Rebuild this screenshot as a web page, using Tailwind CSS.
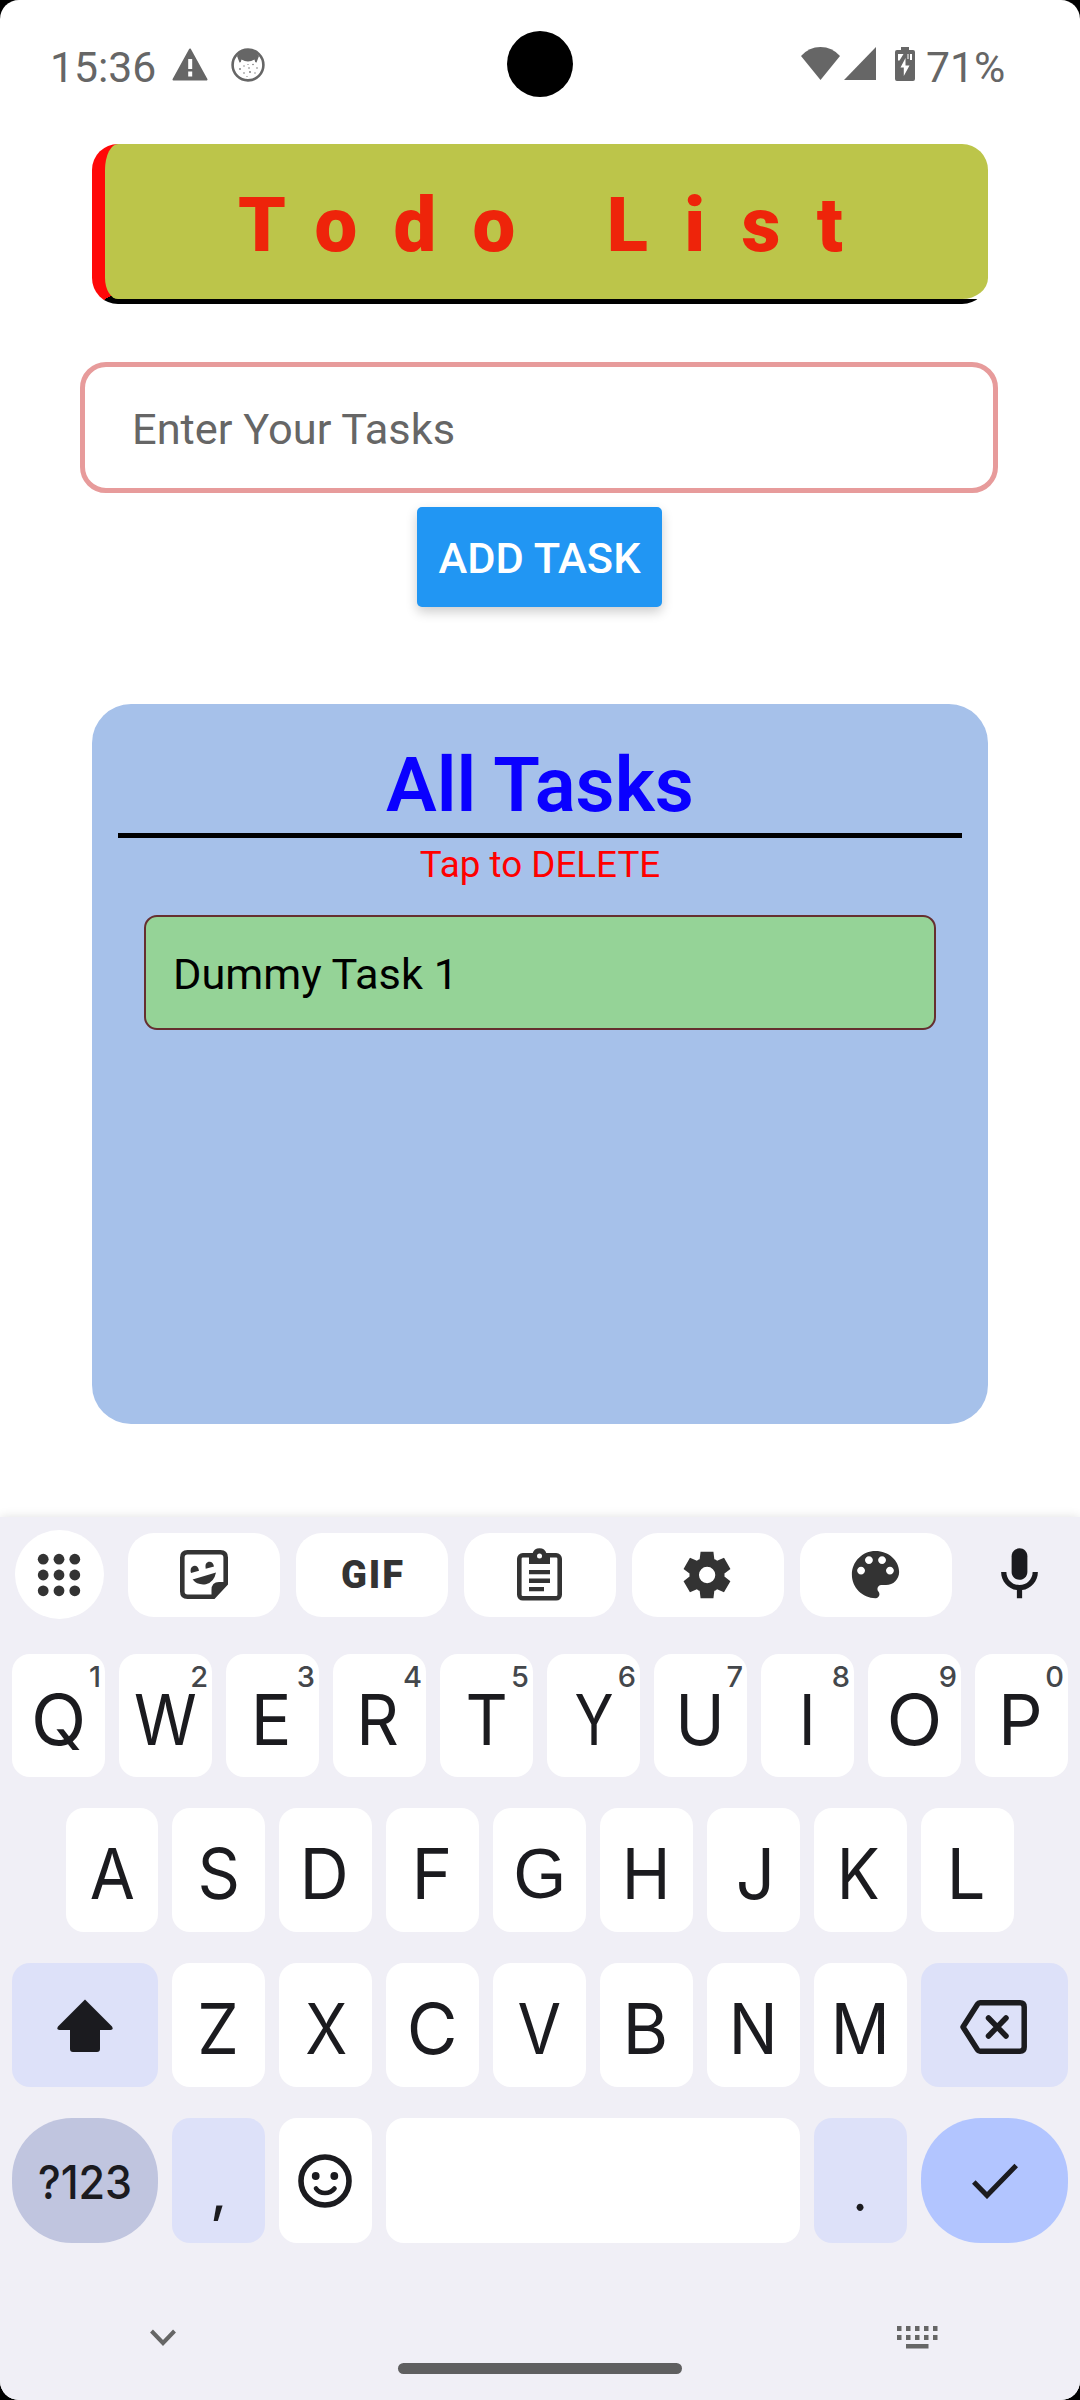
<!DOCTYPE html>
<html lang="en">
<head>
<meta charset="utf-8">
<title>Todo List</title>
<script src="https://cdn.jsdelivr.net/npm/@tailwindcss/browser@4"></script>
</head>
<body class="bg-black">
<div class="relative flex h-[2400px] w-[1080px] flex-col overflow-hidden rounded-[19px] bg-white font-['Roboto',sans-serif]">

  <!-- status bar -->
  <header class="flex h-[144px] shrink-0 items-start pl-[50px] text-[#666]">
    <span class="mt-[42px] w-[122px] text-[42.7px] leading-[50px]">15:36</span>
    <svg class="mt-[48px] h-[33px] w-[36px]" viewBox="0 0 36 33"><path d="M18 1.5 34.5 31.5H1.5Z" fill="#666" stroke="#666" stroke-width="2" stroke-linejoin="round"/><path d="M16.2 11h4v10h-4zM16.2 23.5h4v5h-4z" fill="#fff"/></svg>
    <svg class="mt-[48px] ml-[23px] h-[34px] w-[34px]" viewBox="0 0 34 34"><circle cx="17" cy="17" r="15.4" fill="#fff" stroke="#666" stroke-width="2.6"/><path d="M6 8Q10 1.5 17 1.5T28 8L25.500 14.500Q24 15 23.500 11.500 17 15.500 10.500 11.500 10 15 8.500 14.500Z" fill="#666"/><g fill="#777"><circle cx="9" cy="21" r=".9"/><circle cx="13" cy="18" r=".7"/><circle cx="18" cy="20" r=".8"/><circle cx="22" cy="16.500" r=".8"/><circle cx="26" cy="20" r=".8"/><circle cx="13" cy="25" r=".8"/><circle cx="19" cy="24" r=".9"/><circle cx="24" cy="25" r=".7"/><circle cx="17" cy="16.500" r=".6"/><circle cx="16" cy="28.500" r=".6"/></g></svg>
    <div class="mt-[31px] ml-[242px] size-[66px] rounded-full bg-black"></div>
    <svg class="mt-[47px] ml-[228px] h-[33px] w-[39px]" viewBox="0 0 39 33"><path d="M0 9Q8 0 19.500 0T39 9L19.500 33Z" fill="#666"/></svg>
    <svg class="mt-[47px] ml-[4px] h-[33px] w-[32px]" viewBox="0 0 32 33"><path d="M32 0V33H0Z" fill="#666"/></svg>
    <svg class="mt-[47px] ml-[19px] h-[34px] w-[20px]" viewBox="0 0 20 34"><path d="M6 0h8v3h4q2 0 2 2v27q0 2-2 2H2q-2 0-2-2V5q0-2 2-2h4z" fill="#666"/><path d="M3 7h5.500L4.500 13.500H3zM12.500 7h1v5h-1zM15 7h2v6h-2z" fill="#fff"/><path d="M10.500 11v7.500h4L8.800 29v-8.500H5.500z" fill="#fff"/></svg>
    <span class="mt-[42px] ml-[11px] text-[42.7px] leading-[50px]">71%</span>
  </header>

  <!-- title banner -->
  <div class="mx-[92px] h-[160px] shrink-0 rounded-[26px] bg-[linear-gradient(149.7deg,transparent_calc(50%_+_2px),#000_calc(50%_+_2px)),linear-gradient(#ff0808,#ff0808),linear-gradient(#000,#000)] bg-[size:26px_14px,26px_100%,100%_5px] bg-[position:0_100%,0_0,0_100%] bg-no-repeat pb-[5px] pl-[13px]">
    <h1 class="h-[155px] rounded-[13px_26px_26px_13px/26px_26px_21px_21px] bg-[#bcc54a] pt-[36px] pl-[133px] text-[76px] leading-[90px] font-black tracking-[36.3px] whitespace-nowrap text-[#ee240a]">Todo List</h1>
  </div>

  <!-- task entry -->
  <div class="mt-[58px] ml-[80px] flex h-[131px] w-[918px] shrink-0 items-center rounded-[26px] border-5 border-[#e79b9b] pt-[4px] pl-[47px] text-[43.4px] text-[#666]">Enter Your Tasks</div>
  <button class="mt-[14px] ml-[417px] flex h-[100px] w-[245px] shrink-0 items-center justify-center rounded-[5px] bg-[#2196f3] pt-[3px] text-[43.4px] font-medium whitespace-nowrap text-white shadow-[0_5px_12px_rgba(0,0,0,0.2)]">ADD TASK</button>

  <!-- task list -->
  <section class="mx-[92px] mt-[97px] flex h-[720px] shrink-0 flex-col items-center rounded-[39px] bg-[#a6c1ea] px-[26px] pt-[36px]">
    <h2 class="h-[92.500px] text-[76px] leading-[90px] font-semibold text-[#0a00ff]">All Tasks</h2>
    <div class="h-[5px] w-full shrink-0 bg-black"></div>
    <p class="mt-[5.500px] text-[36.800px] leading-[44px] text-[#ff0000]">Tap to DELETE</p>
    <div class="mt-[28px] flex h-[115px] w-[792px] items-center rounded-[13px] border-[2.6px] border-[#652f2f] bg-[#95d397] pt-[5px] pl-[27px] text-[43.3px] text-black">Dummy Task 1</div>
  </section>

  <!-- keyboard -->
  <div class="mt-[93px] flex h-[883px] shrink-0 flex-col bg-[#f0eff6] px-[12px] pt-[13px] font-['Inter',sans-serif] text-[#1b1b1f] shadow-[0_0_10px_rgba(0,0,0,0.12)]">
    <div class="flex h-[89px] items-center">
      <div class="ml-[3px] flex size-[89px] items-center justify-center rounded-full bg-white pr-px">
        <svg class="size-[44px]" viewBox="0 0 44 44" fill="#333"><circle cx="6.200" cy="6.200" r="5.400"/><circle cx="22" cy="6.200" r="5.400"/><circle cx="37.800" cy="6.200" r="5.400"/><circle cx="6.200" cy="22" r="5.400"/><circle cx="22" cy="22" r="5.400"/><circle cx="37.800" cy="22" r="5.400"/><circle cx="6.200" cy="37.800" r="5.400"/><circle cx="22" cy="37.800" r="5.400"/><circle cx="37.800" cy="37.800" r="5.400"/></svg>
      </div>
      <div class="ml-[24px] flex gap-[16px]">
        <div class="flex h-[84px] w-[152px] items-center justify-center rounded-[26px] bg-white pr-px"><svg class="h-[49px] w-[48px]" viewBox="0 0 48 49" fill="#333"><path d="M7.500 2.300H40.500Q45.700 2.300 45.700 7.500V33.500L33.500 46.700H7.500Q2.300 46.700 2.300 41.500V7.500Q2.300 2.300 7.500 2.300Z" fill="none" stroke="#333" stroke-width="4.600"/><path d="M31.500 47V40Q31.500 32 39 32H47V34.500L34 48Z"/><path d="M11 23Q9.500 17.500 13.500 16 18 15 19 20.800ZM25.700 18.800Q24.500 13 28.500 11.800 33 11 34 16.500ZM12.600 29.500 36 22.600Q34 32.500 26 34.200 17.500 35.500 12.600 29.500Z"/></svg></div>
        <div class="flex h-[84px] w-[152px] items-center justify-center rounded-[26px] bg-white"><span class="pl-[2px] font-['Roboto',sans-serif] text-[38px] leading-[40px] font-black tracking-[2px] text-[#333]">GIF</span></div>
        <div class="flex h-[84px] w-[152px] items-center justify-center rounded-[26px] bg-white pr-px"><svg class="h-[53px] w-[45px]" viewBox="0 0 45 53" fill="#333"><rect x="2.300" y="7.300" width="40.400" height="43" rx="3.500" fill="none" stroke="#333" stroke-width="4.600"/><path d="M12 16V5.500H15.500A7.300 7.300 0 0 1 29.500 5.500H33V16Z"/><circle cx="22.500" cy="8" r="2.500" fill="#fff"/><path d="M12 22H33V26.300H12ZM12 30.600H33V34.900H12ZM12 39H27V43.300H12Z"/></svg></div>
        <div class="flex h-[84px] w-[152px] items-center justify-center rounded-[26px] bg-white pr-[2px]"><svg class="size-[56px]" viewBox="0 0 24 24" fill="#333"><path d="m9.250 22-.4-3.200q-.325-.125-.612-.3-.288-.175-.563-.375L4.700 19.375l-2.750-4.750 2.575-1.950Q4.500 12.500 4.500 12.337v-.675q0-.162.025-.337L1.950 9.375l2.750-4.750 2.975 1.250q.275-.2.575-.375.3-.175.6-.3l.4-3.200h5.500l.4 3.200q.325.125.613.3.287.175.562.375l2.975-1.250 2.750 4.750-2.575 1.950q.025.175.025.337v.675q0 .163-.05.338l2.575 1.950-2.750 4.750-2.950-1.250q-.275.2-.575.375-.3.175-.6.3l-.4 3.200Zm2.800-6.500q1.450 0 2.475-1.025Q15.550 13.450 15.550 12q0-1.450-1.025-2.475Q13.500 8.500 12.050 8.500q-1.475 0-2.488 1.025Q8.550 10.550 8.550 12q0 1.450 1.012 2.475Q10.575 15.500 12.050 15.500Z"/></svg></div>
        <div class="flex h-[84px] w-[152px] items-center justify-center rounded-[26px] bg-white pr-[2px]"><svg class="size-[63px]" viewBox="0 0 24 24" fill="#333"><path d="M12 3c-4.970 0-9 4.030-9 9s4.030 9 9 9c.83 0 1.500-.67 1.500-1.500 0-.39-.15-.74-.39-1.010-.23-.26-.38-.61-.38-.99 0-.83.67-1.500 1.500-1.500H16c2.760 0 5-2.240 5-5 0-4.420-4.030-8-9-8zm-5.500 9c-.83 0-1.500-.67-1.500-1.500S5.670 9 6.500 9 8 9.670 8 10.500 7.330 12 6.500 12zm3-4C8.670 8 8 7.330 8 6.500S8.670 5 9.500 5s1.500.67 1.500 1.500S10.330 8 9.500 8zm5 0c-.83 0-1.500-.67-1.500-1.500S13.670 5 14.500 5s1.500.67 1.500 1.500S15.330 8 14.500 8zm3 4c-.83 0-1.500-.67-1.500-1.500S16.670 9 17.500 9s1.500.67 1.500 1.500-.67 1.500-1.500 1.500z"/></svg></div>
      </div>
      <svg class="ml-[36px] size-[63px]" viewBox="0 0 24 24" fill="#1b1b1f"><path d="M12 14c1.660 0 3-1.340 3-3V5c0-1.660-1.340-3-3-3S9 3.340 9 5v6c0 1.660 1.340 3 3 3z"/><path d="M17 11c0 2.760-2.240 5-5 5s-5-2.240-5-5H5c0 3.530 2.610 6.430 6 6.920V21h2v-3.080c3.390-.49 6-3.390 6-6.920h-2z"/></svg>
    </div>

    <div id="row1" class="mt-[35px] flex gap-[14px]"></div>
    <div id="row2" class="mt-[31px] flex gap-[14px] pl-[54px]"></div>
    <div class="mt-[31px] flex gap-[14px]">
      <div class="flex h-[124px] w-[146px] items-center justify-center rounded-[18px] bg-[#dde1f9] pt-px"><svg class="h-[53px] w-[56px]" viewBox="0 0 56 53" fill="#1b1b1f"><path d="M28 .5 55 27.500Q57 31 53.500 31H43V50Q43 53 40 53H16Q13 53 13 50V31H2.500Q-1 31 1 27.500Z"/></svg></div>
      <div id="row3" class="flex gap-[14px]"></div>
      <div class="flex h-[124px] w-[147px] items-center justify-center rounded-[18px] bg-[#dde1f9] pt-[4px] pr-[3px]"><svg class="h-[54px] w-[67px]" viewBox="0 0 67 54" fill="none" stroke="#1b1b1f" stroke-width="5.500" stroke-linejoin="round"><path d="M20 2.800H60Q64.200 2.800 64.200 7V47Q64.200 51.200 60 51.200H20Q18.500 51.200 17.500 49.700L3 27 17.500 4.300Q18.500 2.800 20 2.800Z"/><path d="M28.500 18 46 36M46 18 28.500 36" stroke-linecap="round"/></svg></div>
    </div>
    <div class="mt-[31px] flex gap-[14px]">
      <div class="flex h-[125px] w-[146px] items-center justify-center rounded-[60px] bg-[#c0c5df] pt-[2px] pr-[2px]"><span class="inline-block leading-[60px]" data-fit="91" data-font="500 47px Inter">?123</span></div>
      <div class="flex h-[125px] w-[93px] items-center justify-center rounded-[18px] bg-[#dde1f9] pt-[20px]"><span class="inline-block leading-[60px]" data-fit="10" data-font="400 56px Inter">,</span></div>
      <div class="flex h-[125px] w-[93px] items-center justify-center rounded-[18px] bg-white pr-px"><svg class="size-[54px]" viewBox="0 0 54 54" fill="#1b1b1f"><circle cx="27" cy="27" r="24" fill="none" stroke="#1b1b1f" stroke-width="5.600"/><circle cx="17.700" cy="22" r="3.900"/><circle cx="36.300" cy="22" r="3.900"/><path d="M18 34.500Q21 39 27 39T36.500 34.500" fill="none" stroke="#1b1b1f" stroke-width="4.600" stroke-linecap="round"/></svg></div>
      <div class="h-[125px] w-[414px] rounded-[18px] bg-white"></div>
      <div class="flex h-[125px] w-[93px] items-center justify-center rounded-[18px] bg-[#dde1f9] pt-[20px]"><span class="inline-block leading-[60px]" data-fit="7.500" data-font="400 56px Inter">.</span></div>
      <div class="flex h-[125px] w-[147px] items-center justify-center rounded-[60px] bg-[#b2c5ff]"><svg class="h-[36px] w-[46px]" viewBox="0 0 46 36" fill="none" stroke="#1b1b1f" stroke-width="5"><path d="M1.800 19 15 32.500 44.200 2.500"/></svg></div>
    </div>
    <div class="mt-[83px] flex justify-between pr-[130px] pl-[137px]">
      <svg class="mt-[3px] h-[18px] w-[28px]" viewBox="0 0 28 18" fill="none" stroke="#666" stroke-width="4"><path d="M2.500 2 14 14 25.500 2"/></svg>
      <svg class="h-[23px] w-[41px]" viewBox="0 0 41 23" fill="#666"><path d="M0 0h4.500v5H0zM9 0h4.500v5H9zM18 0h4.500v5H18zM27 0h4.500v5H27zM36 0h4.500v5H36zM0 9h4.500v5H0zM9 9h4.500v5H9zM18 9h4.500v5H18zM27 9h4.500v5H27zM36 9h4.500v5H36zM9 18h22.500v4.500H9z"/></svg>
    </div>
    <div class="mt-[14px] ml-[386px] h-[11px] w-[284px] rounded-full bg-[#5f5f60]"></div>
  </div>
</div>

<script>
  // letter: drawn width of the glyph in px, plus the long-press digit of the top row
  const rows = {
    row1: [['Q',47.5,1],['W',61,2],['E',31,3],['R',35,4],['T',36.5,5],['Y',37,6],['U',38,7],['I',6.3,8],['O',48,9],['P',35,0]],
    row2: [['A',43],['S',36],['D',40],['F',30.6],['G',45.5],['H',37.5],['J',30.6],['K',36.5],['L',30.6]],
    row3: [['Z',34],['X',39.6],['C',43.7],['V',41.5],['B',36],['N',38],['M',48.5]]
  };
  for (const id in rows) {
    document.getElementById(id).innerHTML = rows[id].map(([ch, w, alt], i) => {
      const box = id === 'row1' ? 'relative flex h-[123px] w-[93px] items-center justify-center rounded-[18px] bg-white pt-[8px]'
                : i === 0 && id === 'row2' ? 'flex h-[124px] w-[92px] items-center justify-center rounded-[18px] bg-white pt-[7px]'
                : 'flex h-[124px] w-[93px] items-center justify-center rounded-[18px] bg-white pt-[7px]';
      const font = ch === 'G' ? "400 70px 'Liberation Sans'" : '400 70px Inter';
      const hint = alt === undefined ? '' : `<span class="absolute top-[8px] right-[4px] text-[29px] leading-[30px] font-medium text-[#44474b]">${alt}</span>`;
      return `<div class="${box}"><span class="inline-block leading-[84px]" data-fit="${w}" data-font="${font}">${ch}</span>${hint}</div>`;
    }).join('');
  }
  // condense each key label to its drawn width and centre its ink on the key
  const ctx = document.createElement('canvas').getContext('2d');
  document.querySelectorAll('[data-fit]').forEach(el => {
    const lh = getComputedStyle(el).lineHeight;
    el.style.font = el.dataset.font;
    el.style.lineHeight = lh;
    ctx.font = el.dataset.font;
    const m = ctx.measureText(el.textContent);
    const l = m.actualBoundingBoxLeft, r = m.actualBoundingBoxRight;
    const s = el.dataset.fit / (l + r);
    el.style.transform = `translateX(${-(r - l - m.width) / 2 * s}px) scaleX(${s})`;
  });
</script>
</body>
</html>
